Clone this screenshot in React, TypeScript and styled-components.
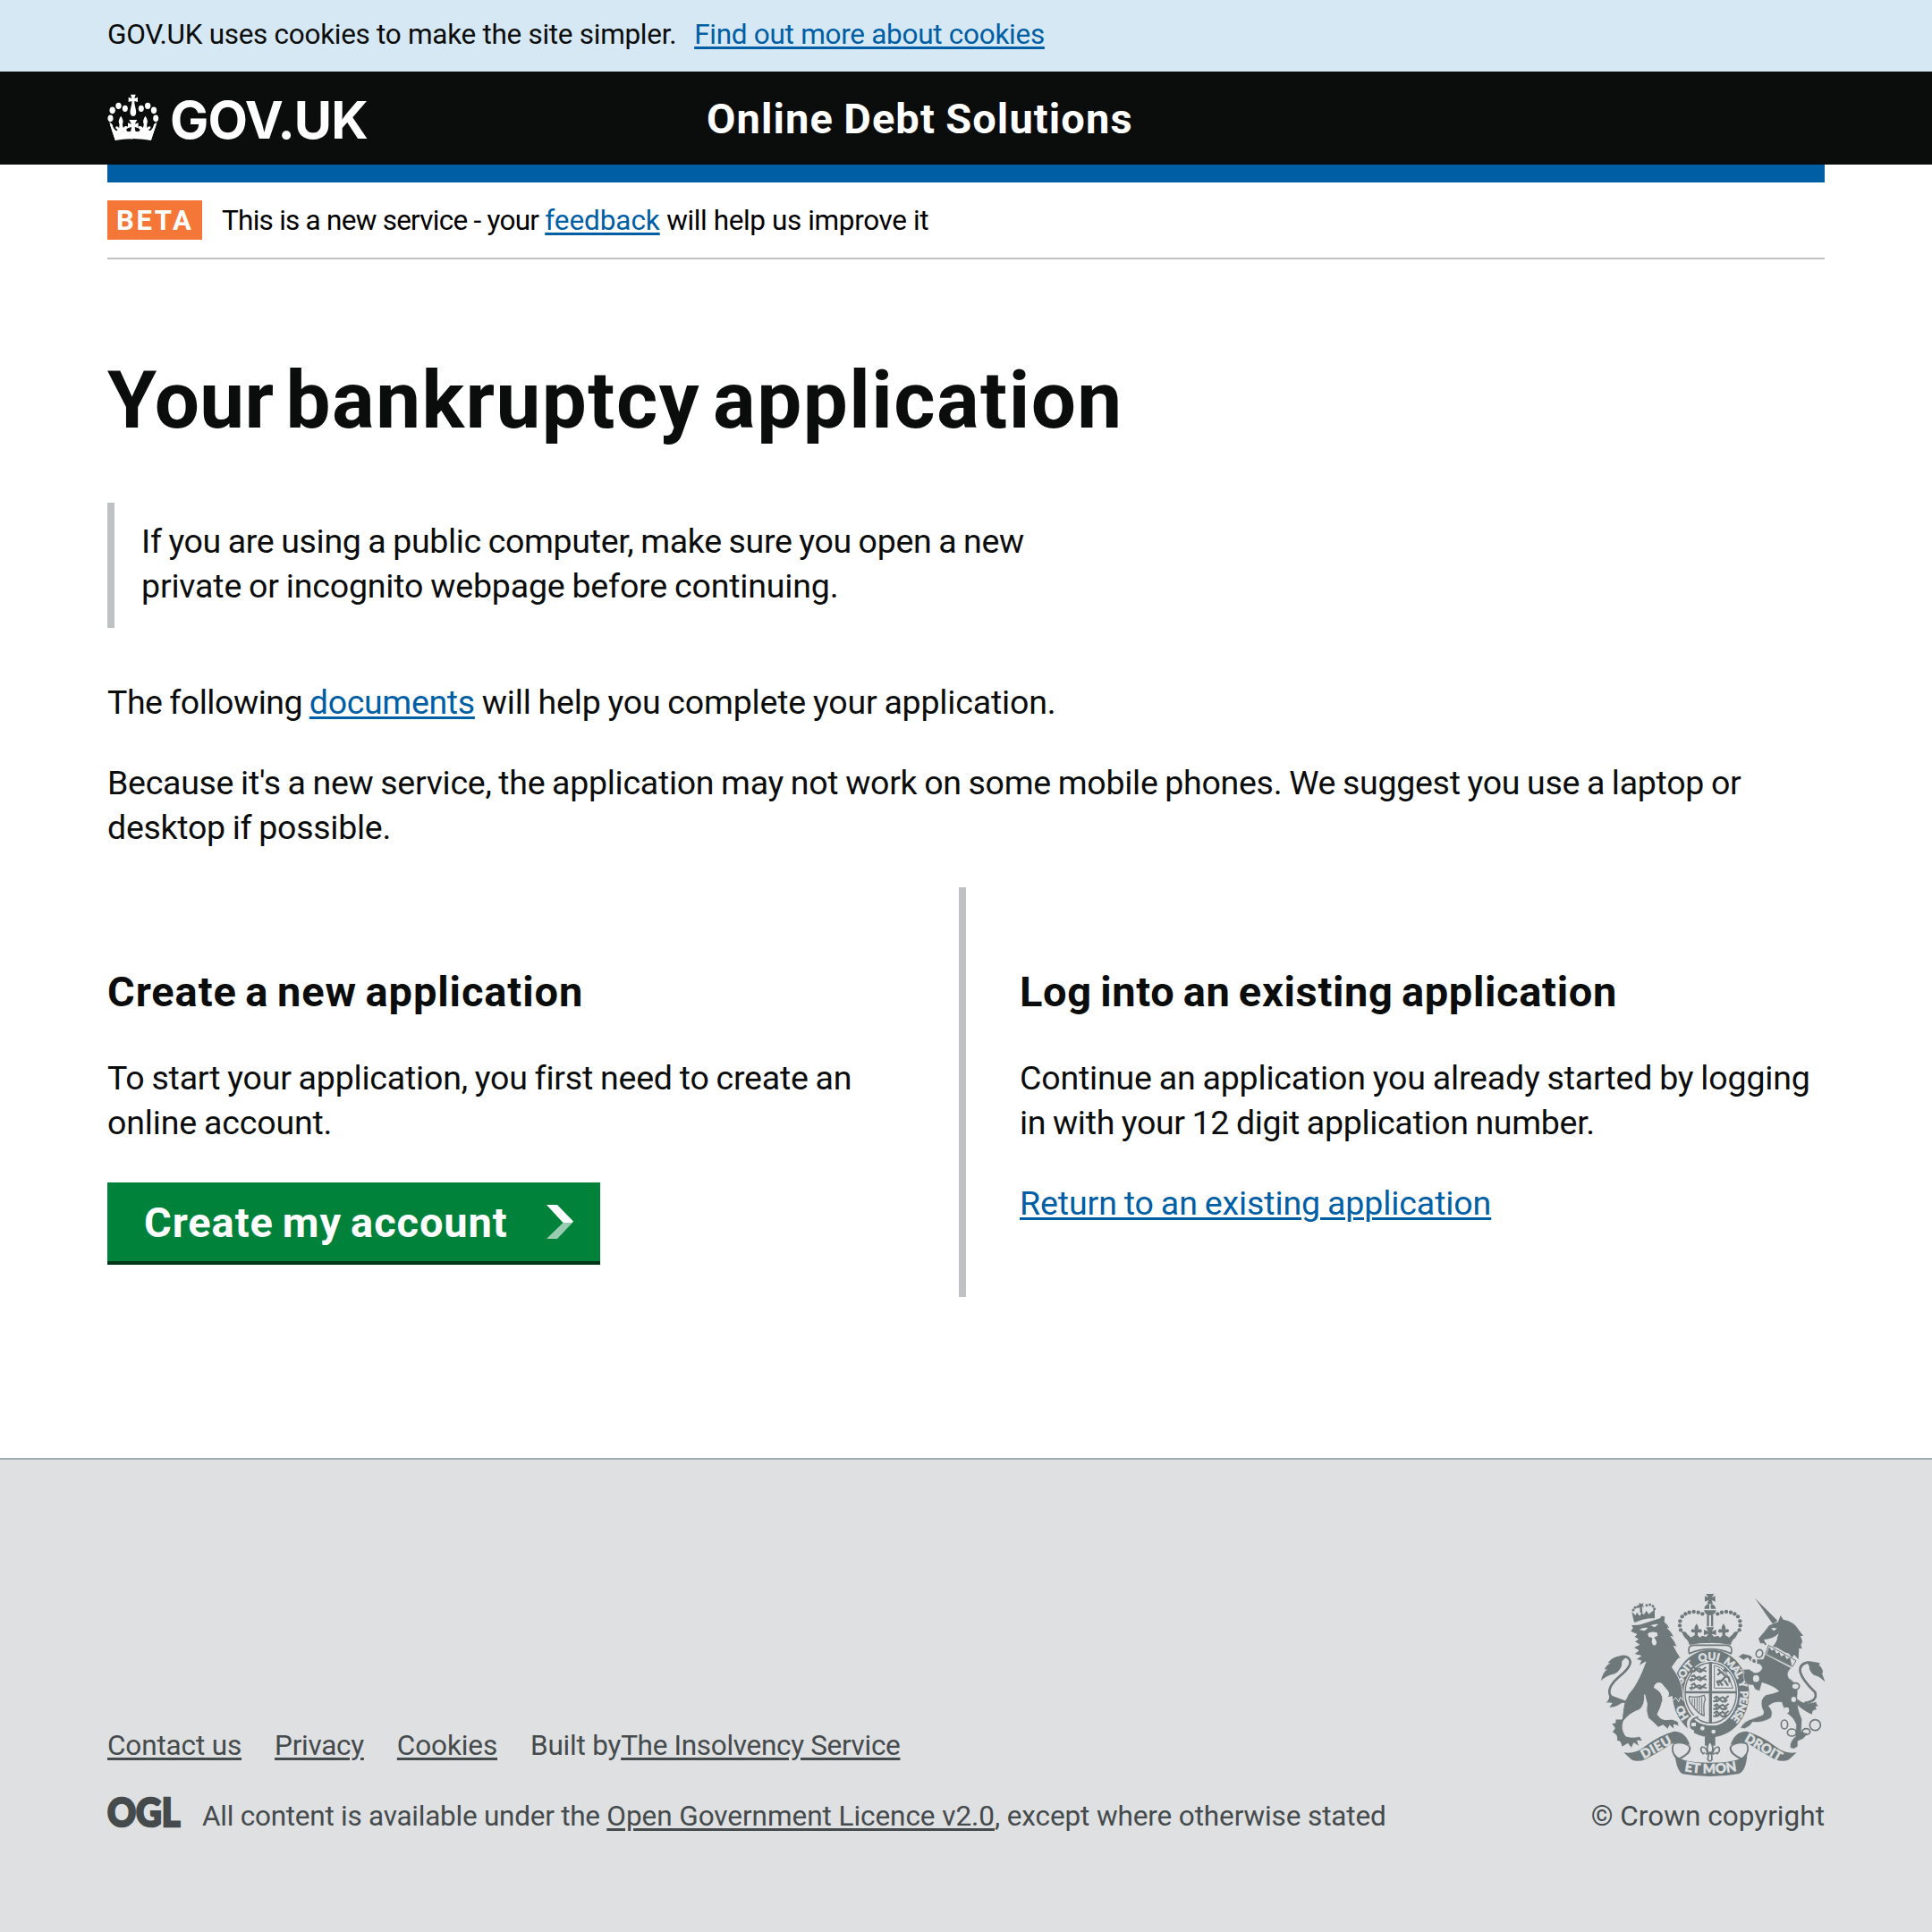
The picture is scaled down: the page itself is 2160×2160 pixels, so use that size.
import React from 'react';
import styled, { createGlobalStyle } from 'styled-components';

const GlobalStyle = createGlobalStyle`
  * { box-sizing: border-box; }
  body {
    margin: 0;
    background: #fff;
    color: #0b0c0c;
    font-family: Roboto, "Liberation Sans", sans-serif;
  }
  h1, h2, p { margin: 0; }
`;

const Page = styled.div`
  display: flex;
  flex-direction: column;
  width: 100%;
  min-height: 2160px;
`;

const Text = styled.span<{ $ls?: number; $block?: boolean }>`
  display: ${p => (p.$block ? 'block' : 'inline')};
  letter-spacing: ${p => p.$ls ?? 0}px;
  white-space: pre;
`;

const Link = styled.a<{ $ls?: number; $muted?: boolean }>`
  color: ${p => (p.$muted ? '#454a4c' : '#005ea5')};
  letter-spacing: ${p => p.$ls ?? 0}px;
  white-space: pre;
  text-decoration: underline;
  text-decoration-thickness: 3px;
  text-underline-offset: 3px;
`;

const CookieBar = styled.div`
  display: flex;
  gap: 20px;
  height: 80px;
  padding: 19px 120px 0;
  background: #d5e8f3;
  font-size: 31.5px;
  line-height: 39px;
`;

const Header = styled.header`
  display: flex;
  height: 104px;
  padding: 0 120px;
  background: #0b0c0c;
  color: #fff;
`;

const Brand = styled.a`
  display: flex;
  align-items: flex-start;
  gap: 12px;
  width: 670px;
  color: inherit;
`;

const BrandName = styled.span`
  margin-top: 19px;
  font: 700 57.75px/70px Inter, "Liberation Sans", sans-serif;
  letter-spacing: -0.9px;
`;

const CrownIcon = styled.svg`
  flex: none;
  width: 58px;
  height: 52px;
  margin-top: 25px;
`;

const ServiceName = styled.span`
  margin-top: 25px;
  font-size: 47px;
  font-weight: 700;
  line-height: 55px;
  letter-spacing: 1.1px;
  word-spacing: -1.5px;
`;

const Container = styled.main`
  display: flex;
  flex-direction: column;
  margin: 0 120px;
  border-top: 20px solid #005ea5;
`;

const PhaseBanner = styled.div`
  display: flex;
  gap: 22px;
  height: 86px;
  padding-top: 20px;
  border-bottom: 2px solid #bfc1c3;
  color: #000;
`;

const PhaseTag = styled.strong`
  width: 106px;
  height: 44px;
  padding-left: 10px;
  background: #f47738;
  color: #fff;
  font-size: 31px;
  line-height: 45px;
  letter-spacing: 2.6px;
`;

const PhaseText = styled.span`
  margin-top: 3px;
  font-size: 31.5px;
  line-height: 39px;
`;

const Title = styled.h1`
  margin-top: 105px;
  font-size: 89px;
  font-weight: 700;
  line-height: 105px;
  word-spacing: -9.5px;
`;

const Paragraph = styled.p<{ $top?: number }>`
  margin-top: ${p => p.$top ?? 0}px;
  font-size: 37.5px;
  line-height: 50px;
  word-spacing: -1.2px;
`;

const Inset = styled.div`
  margin-top: 62px;
  padding: 18px 0 22px 30px;
  border-left: 8px solid #bfc1c3;
`;

const Columns = styled.div`
  display: grid;
  grid-template-columns: 952px 1fr;
  height: 458px;
  margin-top: 42px;
`;

const Column = styled.section<{ $divided?: boolean }>`
  display: flex;
  flex-direction: column;
  align-items: flex-start;
  padding-top: 89px;
  padding-left: ${p => (p.$divided ? 60 : 0)}px;
  border-left: ${p => (p.$divided ? '8px solid #bfc1c3' : 'none')};
`;

const Heading = styled.h2<{ $ls: number }>`
  font-size: 47px;
  font-weight: 700;
  line-height: 55px;
  letter-spacing: ${p => p.$ls}px;
  word-spacing: -3px;
`;

const StartButton = styled.a`
  display: flex;
  justify-content: space-between;
  width: 551px;
  height: 92px;
  margin-top: 42px;
  padding: 17px 30px 0 41px;
  background: #00823b;
  border-bottom: 4px solid #003618;
  color: #fff;
  font-size: 47px;
  font-weight: 700;
  line-height: 55px;
  letter-spacing: 0.9px;
  word-spacing: -2.5px;
`;

const Chevron = styled.svg`
  width: 30px;
  height: 38px;
  margin-top: 8px;
`;

const Footer = styled.footer`
  display: flex;
  justify-content: space-between;
  align-items: flex-end;
  height: 530px;
  margin-top: 180px;
  padding: 0 120px 110px;
  background: #dee0e2;
  border-top: 2px solid #a1acb2;
  color: #454a4c;
  font-size: 31.5px;
  line-height: 39px;
`;

const FooterMeta = styled.div`
  display: flex;
  flex-direction: column;
  gap: 40px;
`;

const FooterLinks = styled.div`
  display: flex;
  gap: 37px;
`;

const Licence = styled.div`
  display: flex;
  gap: 24px;
  height: 39px;
`;

const OglLogo = styled.svg`
  width: 82px;
  height: 36px;
  margin-top: -3px;
  overflow: visible;
`;

const Copyright = styled.div`
  display: flex;
  flex-direction: column;
  align-items: flex-end;
  gap: 25px;
`;

const Crest = styled.svg`
  width: 250px;
  height: 204px;
`;

function Crown() {
  return (
    <CrownIcon viewBox="30 30 174 156" fill="#fff" aria-hidden="true">
      <path d="M108 32H125L121 45L132 41V57L121 54Q120 64 124 76Q132 104 117 105Q101 104 109 76Q113 64 112 54L101 57V41L112 45Z" />
      {[-1, 1].map(s => (
        <g key={s} transform={`translate(116.5 0) scale(${s} 1)`}>
          <ellipse cx="27" cy="79" rx="9" ry="11" />
          <ellipse cx="49" cy="70" rx="9.500" ry="11" />
          <ellipse cx="69.500" cy="85" rx="9.500" ry="11.500" />
          <ellipse cx="76" cy="112" rx="9" ry="11.500" />
          <path d="M0 184V151L4 149Q8 157 14 158Q22 157 24 148Q18 149 17 142Q20 136 28 139L33 144L36 133Q30 119 41 104Q52 119 46 133L47 144Q54 135 59 141Q60 147 52 150Q55 157 62 151Q69 144 71 133L78 132L60 186Q30 180 0 180Z" />
          <path d="M55 155Q66 150 70 132L80 124L60 185Z" />
        </g>
      ))}
      <path d="M103 117H130L122 131L134 127V145L122 141L124 156H109L111 141L99 145V127L111 131Z" />
      <path d="M54 160Q116 152 179 160L175 184Q116 176 58 184Z" />
    </CrownIcon>
  );
}

const DARK = '#6f787b';
const PALE = '#dee0e2';

const crownDots: [number, number][] = [
  [327, 157], [324, 142], [325, 127], [332, 112], [343, 103], [356, 98], [371, 96], [386, 98], [400, 103],
];

function RoyalArms() {
  return (
    <Crest viewBox="60 36 750 612" fill={DARK} aria-label="Royal coat of arms">
      <defs>
        <path id="garter" d="M357 450A99 113 0 1 1 499 450" />
        <path id="motto" d="M330 628Q426 649 522 628" />
      </defs>

      {/* Garter and shield */}
      <ellipse cx="428" cy="370" rx="110" ry="128" fill="none" stroke={DARK} strokeWidth="37" />
      <ellipse cx="428" cy="368" rx="86" ry="101" fill="none" stroke={DARK} strokeWidth="4" />
      <g fill={PALE} stroke={PALE} strokeWidth="1.500" fontFamily='Lato, "Liberation Sans", sans-serif' fontWeight="900" fontSize="36">
        <text><textPath href="#garter" startOffset="2" textLength="47">HO</textPath></text>
        <text><textPath href="#garter" startOffset="118" textLength="76">SOIT</textPath></text>
        <text><textPath href="#garter" startOffset="213" textLength="66">QUI</textPath></text>
        <text><textPath href="#garter" startOffset="294" textLength="74">MAL</textPath></text>
        <text><textPath href="#garter" startOffset="376" textLength="22">Y</textPath></text>
        <text><textPath href="#garter" startOffset="408" textLength="102">PENSE</textPath></text>
      </g>
      <path d="M422 264H432V362H514V370H432V470H422V370H342V362H422Z" />
      <g fill="none" stroke={DARK} strokeWidth="6">
        {[286, 314, 342].map(y => (
          <path key={y} d={`M362 ${y}l10 -5l6 9l12 -4l8 6l14 -10M356 ${y + 10}h16l6 -6l14 8l10 -6l12 4M366 ${y + 4}l-4 12M392 ${y + 4}l4 10`} />
        ))}
        {[386, 412, 436].map(y => (
          <path key={y} d={`M438 ${y}l10 -6l8 8l12 -6l8 6l12 -10M436 ${y + 10}h14l8 -6l10 8l16 -6M448 ${y}l-4 12M474 ${y + 2}l4 12`} />
        ))}
        <path strokeWidth="3" d="M440 276Q484 284 502 352H440Z" />
        <path strokeWidth="7" d="M452 288l10 10l-12 10M464 298l14 14l-12 14l-16 4l6 14M478 312l10 4l4 18M474 326l12 18M458 330l10 14M472 296l4 -8l8 10" />
        <path strokeWidth="4" d="M356 380Q376 386 406 376L410 390Q402 400 406 444Q386 440 368 412Q352 396 356 380Z" />
        <path strokeWidth="3" d="M366 386V404M374 386V416M382 384V426M390 382V434M398 382V440" />
      </g>
      <path d="M370 462Q420 486 470 474L490 488Q430 520 372 496Z" />
      <path d="M384 446Q352 452 354 474Q356 494 372 496M352 474H378" fill="none" stroke={PALE} strokeWidth="12" />
      <path d="M386 448Q360 454 360 474Q360 490 374 492" fill="none" stroke={DARK} strokeWidth="5" />
      <circle cx="400" cy="487" r="7" fill={PALE} />
      <circle cx="437" cy="498" r="7" fill={PALE} />

      {/* Imperial crown */}
      <path d="M412 36H439L431 48L443 43V62L431 57L435 70H416L420 57L408 62V43L420 48Z" />
      <path d="M406 86Q408 72 423 70V86ZM428 86V70Q443 72 445 86ZM405 91H446Q444 106 425 108Q408 106 405 91Z" />
      <path d="M415 106H422V145H415ZM429 106H436V145H429Z" />
      {[-1, 1].map(s => (
        <g key={s} transform={`translate(425.500 0) scale(${s} 1)`}>
          {crownDots.map(([x, y]) => <circle key={`${x}-${y}`} cx={425.5 - x} cy={y} r="6.500" />)}
          <path d="M0 205V176L8 174L13 180L26 176L34 182L42 174L40 164Q28 170 27 160Q30 150 40 156Q36 148 45 136Q55 148 51 156Q62 150 64 160Q62 168 51 165L51 174L64 182L76 172Q80 160 96 162Q90 176 84 184Q72 192 70 207Q36 200 0 200Z" />
        </g>
      ))}
      <path d="M412 148H439L432 162L446 156V174L432 170L436 186H415L419 170L405 174V156L419 162Z" />
      <path d="M356 236Q348 208 372 208H478Q504 208 496 236Q426 206 356 236Z" fill={PALE} stroke={DARK} strokeWidth="5" />

      {/* Lion */}
      <g stroke={PALE} strokeWidth="3">
        <path d="M160 140L190 138L258 116L262 108L276 112L273 130Q284 138 292 152L282 150Q298 164 306 182L294 178Q308 194 316 214L304 211Q314 232 328 252L320 252Q308 266 298 282Q322 312 332 350L336 394L326 382L320 398L311 384L299 394L298 380L282 384Q291 372 284 362L262 336Q242 330 238 350Q268 366 267 392Q260 420 249 440Q258 456 276 458Q300 452 318 464L322 480L305 474L304 490L290 477L284 490L268 476L252 484Q236 466 218 452Q209 430 214 404L206 374Q208 408 190 424Q152 438 136 462Q126 486 142 512Q160 520 190 514L200 530L182 528L188 548L170 536L162 554L150 538L130 550L124 532L112 528Q118 508 97 500L106 486L95 470L108 468L108 456L130 456Q134 420 138 400Q150 370 168 352Q182 330 194 304L210 264L186 278L194 260L176 256L194 244L170 238L186 226L168 216L188 206L172 196L184 188L170 180L180 172L158 162L166 150Z" />
      </g>
      <path d="M188 156Q200 148 218 150L206 160ZM226 142Q240 136 252 138L240 148ZM216 170Q226 160 248 166L250 176L238 182Q252 198 242 208Q232 212 230 196L232 184L220 180Z" fill={PALE} />
      <path d="M170 128L163 96L176 108L180 98L190 110L196 98L204 106L212 92L220 104L240 88L240 118Q205 116 174 132Z" />
      <g>
        <circle cx="168" cy="90" r="4.500" /><circle cx="174" cy="82" r="4.500" /><circle cx="183" cy="79" r="4.500" />
        <circle cx="213" cy="74" r="4.500" /><circle cx="224" cy="72" r="4.500" /><circle cx="234" cy="77" r="4.500" /><circle cx="239" cy="86" r="4.500" />
        <path d="M188 66l8 4l7 -4l-3 8l5 7l-8 -2l2 20h-8l-1 -18l-7 2l4 -8z" />
      </g>
      <path d="M144 398Q98 398 88 370Q84 344 120 314Q160 282 158 262Q150 240 122 248" fill="none" stroke={DARK} strokeWidth="8" />
      <path d="M146 246Q112 240 94 256L82 268L92 268Q76 276 72 290L82 288Q64 300 60 328Q76 310 106 304Q132 290 130 262Z" />
      <path d="M88 374Q88 394 76 400Q92 400 98 402Q92 412 88 416Q112 418 140 394Z" />

      {/* Unicorn */}
      <path d="M576 50L652 126L636 137Z" />
      <path d="M624 142L654 130L662 108L671 122Q708 128 724 158L738 176L728 178Q740 196 730 206L734 220L724 218L722 256L708 240L700 250L690 236L676 232L650 216L636 212Q650 196 652 182Q640 192 628 196Q626 206 610 208L606 202L594 202L588 186Q608 164 624 142Z" />
      <path d="M630 152Q640 148 650 152L640 160ZM606 190Q640 186 656 168Q652 192 618 212Z" fill={PALE} />
      <path d="M622 208L714 260L702 280L612 236Z" fill={PALE} stroke={DARK} strokeWidth="3" />
      <path d="M616 236L624 214L632 226L642 222L648 236L658 232L664 246L676 240L682 254L694 250L700 278Z" />
      <path d="M610 238L698 284Q680 302 690 318Q728 342 718 382Q718 424 734 456L732 498L754 504L738 522L720 530L720 548L706 556L694 552Q692 530 712 514L714 474Q704 450 690 442Q674 430 666 400Q640 396 622 412Q640 430 630 452Q600 470 568 466Q560 482 542 488L526 486Q542 460 570 454L602 442Q610 434 600 420Q590 388 614 374Q640 370 656 362Q640 346 600 334L592 362L576 356L570 342Q550 344 542 330Q534 310 540 296L526 290L556 288L574 300Q594 302 600 284Q596 268 576 270L560 262L552 250L538 258L520 246L536 236L560 242L574 254Q598 256 604 254Z" stroke={PALE} strokeWidth="2" />
      <path d="M742 402Q788 396 778 366Q736 326 728 298Q724 272 752 266Q770 264 782 274" fill="none" stroke={DARK} strokeWidth="8" />
      <path d="M752 268Q778 260 796 270L790 274Q806 288 804 302L800 300L812 332Q794 312 774 308Q758 296 758 278Z" />
      <path d="M718 388Q740 412 782 398Q780 406 790 412Q772 412 784 424Q766 424 768 440Q740 430 716 406Z" />
      <g fill="none" stroke={DARK} strokeWidth="5">
        <ellipse cx="591" cy="236" rx="11" ry="13" transform="rotate(20 591 236)" />
        <ellipse cx="573" cy="261" rx="8" ry="10" stroke={PALE} />
        <ellipse cx="580" cy="320" rx="13" ry="14" fill={PALE} />
        <ellipse cx="712" cy="346" rx="13" ry="11" fill={PALE} />
        <ellipse cx="675" cy="474" rx="11" ry="15" />
        <ellipse cx="700" cy="501" rx="15" ry="12" />
        <ellipse cx="748" cy="498" rx="13" ry="10" />
        <circle cx="778" cy="476" r="18" />
      </g>
      <ellipse cx="706" cy="390" rx="8" ry="9" fill={PALE} />
      <ellipse cx="682" cy="426" rx="9" ry="10" fill={PALE} />

      {/* Motto ribbon */}
      {[-1, 1].map(s => (
        <g key={s} transform={`translate(426 0) scale(${s} 1)`}>
          <path d="M290 568Q252 574 220 548Q170 510 122 497Q84 496 68 542L86 538Q106 528 128 538Q176 570 216 590Q244 602 264 592Z" />
          <path d="M69 548Q90 530 122 538Q136 560 110 592Q92 584 74 570Q66 560 69 548Z" fill={PALE} stroke={DARK} strokeWidth="5" />
          <path d="M66 552Q80 586 110 590" fill="none" stroke={DARK} strokeWidth="5" />
        </g>
      ))}
      <path d="M308 572Q320 602 426 602Q532 602 544 572L550 576Q546 632 520 640Q426 656 334 640Q312 628 308 572Z" />
      <g fill={PALE} stroke={PALE} strokeWidth="1.500" fontFamily='Lato, "Liberation Sans", sans-serif' fontWeight="900" fontSize="43">
        <text transform="translate(203 590) rotate(-29)" textLength="110">DIEU</text>
        <text transform="translate(539 529) rotate(30)" textLength="136">DROIT</text>
        <text fontSize="45"><textPath href="#motto" startOffset="9" textLength="178">ET MON</textPath></text>
      </g>
      <path d="M408 516H443V545H408Z" />
      <path d="M425 530Q440 548 432 568H419Q411 548 425 530ZM416 568Q412 548 398 550Q390 560 402 572L408 568M435 568Q440 548 454 550Q462 560 450 572L443 568M410 572H442M420 574L418 592Q425 602 432 592L431 574" fill={PALE} stroke={DARK} strokeWidth="5" />
    </Crest>
  );
}

export default function App() {
  return (
    <Page>
      <GlobalStyle />
      <CookieBar>
        <Text $ls={-0.29}>GOV.UK uses cookies to make the site simpler.</Text>
        <Link $ls={-0.28}>Find out more about cookies</Link>
      </CookieBar>
      <Header>
        <Brand>
          <Crown />
          <BrandName>GOV.UK</BrandName>
        </Brand>
        <ServiceName>Online Debt Solutions</ServiceName>
      </Header>
      <Container>
        <PhaseBanner>
          <PhaseTag>BETA</PhaseTag>
          <PhaseText>
            <Text $ls={-0.75}>{'This is a new service - your '}</Text>
            <Link $ls={-0.07}>feedback</Link>
            <Text $ls={-0.38}>{' will help us improve it'}</Text>
          </PhaseText>
        </PhaseBanner>

        <Title>
          <Text $ls={0.4}>{'Your '}</Text>
          <Text $ls={1.45}>bankruptcy application</Text>
        </Title>

        <Inset>
          <Paragraph>
            <Text $block $ls={-0.32}>If you are using a public computer, make sure you open a new</Text>
            <Text $block $ls={-0.17}>private or incognito webpage before continuing.</Text>
          </Paragraph>
        </Inset>

        <Paragraph $top={58}>
          <Text $ls={-0.46}>{'The following '}</Text>
          <Link $ls={-0.32}>documents</Link>
          <Text $ls={-0.18}>{' will help you complete your application.'}</Text>
        </Paragraph>
        <Paragraph $top={40}>
          <Text $block $ls={-0.28}>
            {"Because it's a new service, the application may not work on some mobile phones. We suggest you use a laptop or"}
          </Text>
          <Text $block $ls={-0.26}>desktop if possible.</Text>
        </Paragraph>

        <Columns>
          <Column>
            <Heading $ls={0.9}>Create a new application</Heading>
            <Paragraph $top={44}>
              <Text $block $ls={-0.2}>To start your application, you first need to create an</Text>
              <Text $block $ls={-0.15}>online account.</Text>
            </Paragraph>
            <StartButton>
              Create my account
              <Chevron viewBox="0 0 30 38" aria-hidden="true">
                <path d="M0 0H12L30 18.500L29 20H18.500Z" fill="#fff" />
                <path d="M18.500 20H29L12 38H0Z" fill="#99cdb1" />
              </Chevron>
            </StartButton>
          </Column>
          <Column $divided>
            <Heading $ls={0.66}>Log into an existing application</Heading>
            <Paragraph $top={44}>
              <Text $block $ls={-0.17}>Continue an application you already started by logging</Text>
              <Text $block $ls={-0.31}>in with your 12 digit application number.</Text>
            </Paragraph>
            <Paragraph $top={40}>
              <Link $ls={-0.1}>Return to an existing application</Link>
            </Paragraph>
          </Column>
        </Columns>
      </Container>

      <Footer>
        <FooterMeta>
          <FooterLinks>
            <Link $muted $ls={-0.15}>Contact us</Link>
            <Link $muted $ls={-0.28}>Privacy</Link>
            <Link $muted $ls={-0.12}>Cookies</Link>
            <span>
              <Text $ls={-0.22}>Built by</Text>
              <Link $muted $ls={-0.32}>The Insolvency Service</Link>
            </span>
          </FooterLinks>
          <Licence>
            <OglLogo viewBox="0 0 82 36" aria-label="OGL">
              <text
                x="0"
                y="33.500"
                textLength="81.500"
                lengthAdjust="spacingAndGlyphs"
                fontFamily='Lato, "Liberation Sans", sans-serif'
                fontWeight="900"
                fontSize="44"
                fill="#454a4c"
                stroke="#454a4c"
                strokeWidth="2.500"
              >
                OGL
              </text>
            </OglLogo>
            <span>
              <Text $ls={-0.25}>{'All content is available under the '}</Text>
              <Link $muted $ls={-0.06}>Open Government Licence v2.0</Link>
              <Text $ls={-0.12}>, except where otherwise stated</Text>
            </span>
          </Licence>
        </FooterMeta>
        <Copyright>
          <RoyalArms />
          <Text $ls={0.03}>© Crown copyright</Text>
        </Copyright>
      </Footer>
    </Page>
  );
}
